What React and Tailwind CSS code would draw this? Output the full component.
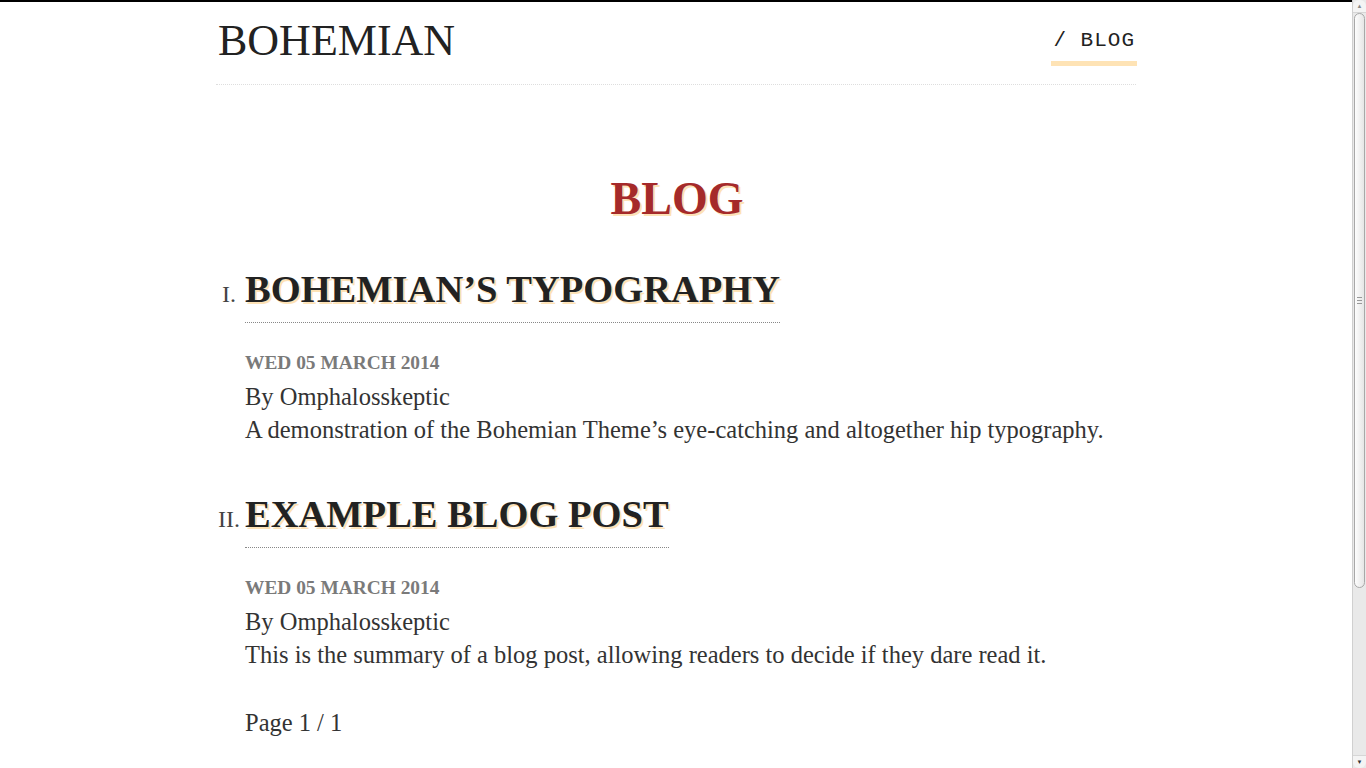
import React from 'react';

const POSTS = [
  {
    num: 'I.',
    title: 'BOHEMIAN’S TYPOGRAPHY',
    date: 'WED 05 MARCH 2014',
    author: 'Omphalosskeptic',
    summary: 'A demonstration of the Bohemian Theme’s eye-catching and altogether hip typography.',
  },
  {
    num: 'II.',
    title: 'EXAMPLE BLOG POST',
    date: 'WED 05 MARCH 2014',
    author: 'Omphalosskeptic',
    summary: 'This is the summary of a blog post, allowing readers to decide if they dare read it.',
  },
];

const serif = "font-['Liberation_Serif','DejaVu_Serif',serif]";

function PostItem({ post }) {
  return (
    <li className="flex items-baseline">
      <span className="w-[27px] shrink-0 pr-[9px] text-right text-[24px] text-[#444] whitespace-nowrap">
        {post.num}
      </span>
      <div>
        <h2 className="inline-block text-[38.5px] font-bold leading-[44px] text-[#222] border-b border-dotted border-[#888] pb-[11px] [text-shadow:2px_2px_0_#fde2b6]">
          {post.title}
        </h2>
        <div className="mt-[23px] text-[19.4px] font-bold text-[#7a7a7a] leading-[34px]">{post.date}</div>
        <div className="text-[24.5px] leading-[33px] text-[#333]">By {post.author}</div>
        <div className="text-[24.5px] leading-[33px] text-[#333]">{post.summary}</div>
      </div>
    </li>
  );
}

function Scrollbar() {
  return (
    <div className="w-[14px] shrink-0 flex flex-col bg-[#e9e9e9] border-l border-[#d0d0d0]">
      <div className="h-[13px] flex items-center justify-center text-[6px] leading-none text-[#888] bg-[#f4f4f4] border-b border-[#d6d6d6] rounded-t-[6px]">
        ▲
      </div>
      <div className="h-[575px] mx-[1px] rounded-[6px] border border-[#a8a8a8] bg-gradient-to-r from-[#fdfdfd] to-[#e6e6e6] flex items-center justify-center">
        <div className="flex flex-col gap-[2px]">
          <span className="block w-[5px] h-px bg-[#999]" />
          <span className="block w-[5px] h-px bg-[#999]" />
          <span className="block w-[5px] h-px bg-[#999]" />
        </div>
      </div>
      <div className="flex-1" />
      <div className="h-[13px] flex items-center justify-center text-[6px] leading-none text-[#333] bg-[#f4f4f4] border-t border-[#d6d6d6] rounded-b-[6px]">
        ▼
      </div>
    </div>
  );
}

export default function App() {
  return (
    <div className="h-screen flex overflow-hidden bg-white">
      <div className={`flex-1 border-t-2 border-black ${serif}`}>
        <div className="mx-auto w-[920px]">
          <header className="flex items-end justify-between border-b border-dotted border-[#dedede] pt-[14px] pb-[18px] pl-[2px]">
            <h1 className="text-[44px] leading-[50px] font-normal text-[#222]">BOHEMIAN</h1>
            <nav className="font-['Liberation_Mono',monospace] text-[21px] leading-[28px] tracking-[1px] text-[#222] border-b-[5px] border-[#fee3b5] pb-[6px] pl-[2px] pr-[2px] mr-[-1px]">
              / BLOG
            </nav>
          </header>

          <main className="pl-[2px]">
            <h1 className="mt-[88px] text-center text-[46px] leading-[52px] font-bold text-[#a52a2a] [text-shadow:2px_2px_0_#fde2b6]">
              BLOG
            </h1>

            <ol className="mt-[42px] flex flex-col gap-[46px]">
              {POSTS.map((p) => (
                <PostItem key={p.num} post={p} />
              ))}
            </ol>

            <p className="mt-[35px] pl-[27px] text-[24.5px] leading-[33px] text-[#333]">Page 1 / 1</p>
          </main>
        </div>
      </div>
      <Scrollbar />
    </div>
  );
}
